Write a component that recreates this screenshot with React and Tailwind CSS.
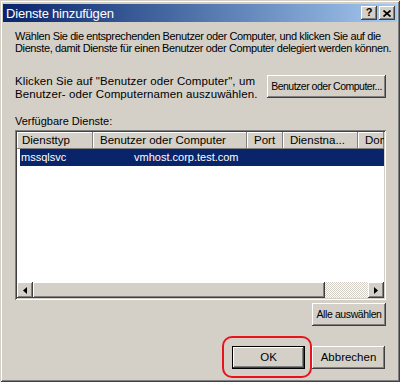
export default function App() {
  const raised =
    "bg-[#d4d0c8] shadow-[inset_-1px_-1px_#404040,inset_1px_1px_#ffffff,inset_-2px_-2px_#808080,inset_2px_2px_#d4d0c8]";
  const hdr =
    "h-[17px] shrink-0 bg-[#d4d0c8] shadow-[inset_-1px_-1px_#808080,inset_1px_1px_#ffffff] pl-[5px] leading-[17px] overflow-hidden whitespace-nowrap";
  return (
    <div className="w-[400px] h-[382px] overflow-hidden bg-[#d4d0c8] text-black font-['Liberation_Sans',Arial,sans-serif] flex flex-col p-[3px] pt-[4px] shadow-[inset_1px_1px_#d4d0c8,inset_-1px_-1px_#404040,inset_2px_2px_#ffffff,inset_-2px_-2px_#808080]">
      {/* Title bar */}
      <div className="h-[18px] shrink-0 flex items-center pl-[3px] pr-[2px] bg-linear-to-r from-[#0a246a] to-[#a6caf0]">
        <span className="flex-1 text-white text-[13px] tracking-[-0.2px] leading-none">
          Dienste hinzufügen
        </span>
        <div className="flex gap-[2px]">
          <div className={`w-[16px] h-[14px] ${raised} flex items-center justify-center text-[11px] font-bold leading-none pb-[1px]`}>
            ?
          </div>
          <div className={`w-[16px] h-[14px] ${raised} flex items-center justify-center`}>
            <svg width="8" height="7" viewBox="0 0 8 7">
              <path d="M0.5 0.5L7.5 6.5M7.5 0.5L0.5 6.5" stroke="#000" strokeWidth="1.7" />
            </svg>
          </div>
        </div>
      </div>

      {/* Content */}
      <div className="flex flex-col pl-[12px] pr-[11px]">
        <p className="mt-[8px] text-[11px] leading-[12px] tracking-[-0.38px] whitespace-nowrap">
          Wählen Sie die entsprechenden Benutzer oder Computer, und klicken Sie auf die
          <br />
          Dienste, damit Dienste für einen Benutzer oder Computer delegiert werden können.
        </p>

        <div className="mt-[21px] flex justify-between items-start">
          <p className="text-[11.5px] leading-[13px] tracking-[0.1px] whitespace-nowrap">
            Klicken Sie auf "Benutzer oder Computer", um
            <br />
            Benutzer- oder Computernamen auszuwählen.
          </p>
          <div className={`w-[119px] h-[23px] ${raised} flex items-center justify-center text-[10.5px] tracking-[-0.5px] whitespace-nowrap`}>
            Benutzer oder Computer...
          </div>
        </div>

        <div className="mt-[14px] text-[11px] leading-[12px]">Verfügbare Dienste:</div>

        {/* List view */}
        <div className="mt-[3px] h-[170px] shrink-0 bg-white p-[2px] flex flex-col shadow-[inset_1px_1px_#808080,inset_-1px_-1px_#ffffff,inset_2px_2px_#404040,inset_-2px_-2px_#d4d0c8]">
          <div className="flex text-[11.5px] overflow-hidden">
            <div className={`${hdr} w-[76px]`}>Diensttyp</div>
            <div className={`${hdr} w-[154px] pl-[7px]`}>Benutzer oder Computer</div>
            <div className={`${hdr} w-[36px] pl-[7px]`}>Port</div>
            <div className={`${hdr} w-[75px] pl-[7px]`}>Dienstna...</div>
            <div className={`${hdr} flex-1 pl-[7px]`}>Dom</div>
          </div>
          <div className="flex-1 flex flex-col">
            <div className="ml-[3px] h-[17px] bg-[#0a246a] text-white flex items-center text-[11px] whitespace-nowrap">
              <span className="w-[114px] pl-[1px]">mssqlsvc</span>
              <span>vmhost.corp.test.com</span>
            </div>
          </div>
          {/* Horizontal scrollbar */}
          <div className="h-[16px] shrink-0 flex">
            <div className={`w-[16px] h-[16px] ${raised} flex items-center justify-center`}>
              <svg width="4" height="7" viewBox="0 0 4 7">
                <path d="M4 0L0 3.5L4 7Z" fill="#000" />
              </svg>
            </div>
            <div className={`w-[292px] h-[16px] ${raised}`} />
            <div className="flex-1 h-[16px] bg-[repeating-conic-gradient(#d4d0c8_0_25%,#ffffff_0_50%)] bg-size-[2px_2px]" />
            <div className={`w-[16px] h-[16px] ${raised} flex items-center justify-center`}>
              <svg width="4" height="7" viewBox="0 0 4 7">
                <path d="M0 0L4 3.5L0 7Z" fill="#000" />
              </svg>
            </div>
          </div>
        </div>

        <div className={`mt-[3px] self-end w-[74px] h-[23px] ${raised} flex items-center justify-center text-[10.5px] tracking-[-0.4px] whitespace-nowrap`}>
          Alle auswählen
        </div>

        <div className="mt-[20px] flex justify-end gap-[7px] pr-[1px]">
          <div className="relative">
            <div className="w-[73px] h-[23px] bg-[#d4d0c8] flex items-center justify-center text-[11.5px] shadow-[inset_0_0_0_1px_#000000,inset_-2px_-2px_#404040,inset_2px_2px_#ffffff,inset_-3px_-3px_#808080,inset_3px_3px_#d4d0c8]">
              OK
            </div>
            <div className="absolute left-[-10px] top-[-10px] right-[-7px] bottom-[-9px] border-2 border-[#e8141c] rounded-[10px]" />
          </div>
          <div className={`w-[73px] h-[23px] ${raised} flex items-center justify-center text-[11.5px]`}>
            Abbrechen
          </div>
        </div>
      </div>
    </div>
  );
}
